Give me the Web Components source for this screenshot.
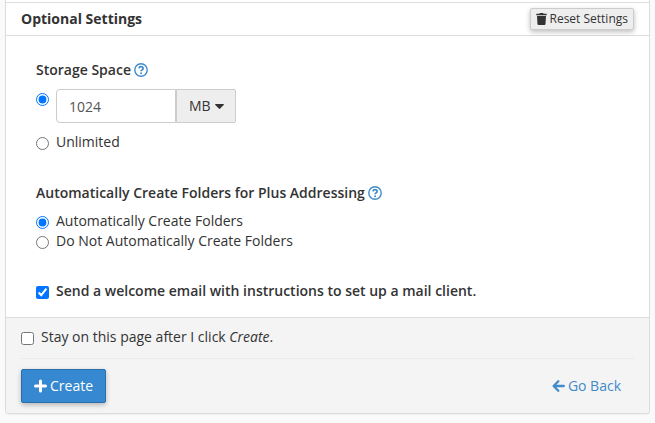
<!DOCTYPE html>
<html lang="en">
<head>
<meta charset="utf-8">
<title>Create an Email Account</title>
<style>
body {
  margin: 0;
  background: #fafafa;
  color: #333;
  font: 14px/20px "Open Sans", "Noto Sans", sans-serif;
}
</style>
</head>
<body>
<form-panel>
  <span slot="title">Optional Settings</span>
  <reset-button slot="action"></reset-button>
  <storage-space></storage-space>
  <plus-addressing></plus-addressing>
  <welcome-email></welcome-email>
  <form-footer slot="footer"></form-footer>
</form-panel>

<script>
const choiceStyle = `
  * { box-sizing: border-box; }
  label { display: flex; align-items: flex-start; }
  input[type=radio], input[type=checkbox] {
    flex: none;
    width: 13px;
    height: 13px;
    margin: 5px 7px 0 0;
    accent-color: #0075ff;
  }
`;

class FormPanel extends HTMLElement {
  constructor() {
    super();
    this.attachShadow({mode: 'open'}).innerHTML = `
    <style>
    :host { display: block; padding: 0 5px 9px; }
    section {
      border: 1px solid #ddd;
      border-top: 0;
      border-radius: 0 0 4px 4px;
      background: #fff;
      box-shadow: 0 1px 1px rgba(0, 0, 0, .05);
      padding-top: 2px;
    }
    header {
      display: flex;
      align-items: center;
      justify-content: space-between;
      height: 34px;
      box-sizing: border-box;
      padding: 0 15px;
      border: solid #ddd;
      border-width: 1px 0;
    }
    h3 { margin: 0; font-size: 14px; font-weight: 700; }
    .body { display: grid; gap: 30px; padding: 24px 30px 16px; }
    </style>
    <section>
      <header><h3><slot name="title"></slot></h3><slot name="action"></slot></header>
      <div class="body"><slot></slot></div>
      <slot name="footer"></slot>
    </section>
    `;
  }
}

class ResetButton extends HTMLElement {
  constructor() {
    super();
    this.attachShadow({mode: 'open'}).innerHTML = `
    <style>
    :host { display: block; }
    button {
      display: flex;
      align-items: center;
      gap: 3px;
      height: 22px;
      padding: 0 5px;
      border: 1px solid #ccc;
      border-radius: 2px;
      background: #eee;
      box-shadow: 0 2px 5px rgba(0, 0, 0, .26);
      color: #333;
      font: 12px/18px "Open Sans", "Noto Sans", sans-serif;
    }
    svg { width: 11px; height: 12px; }
    </style>
    <button type="button">
      <svg viewBox="0 0 448 512" fill="currentColor" aria-hidden="true"><path d="M432 32H312l-9-19A24 24 0 0 0 281 0H167a24 24 0 0 0-22 13l-9 19H16A16 16 0 0 0 0 48v32a16 16 0 0 0 16 16h416a16 16 0 0 0 16-16V48a16 16 0 0 0-16-16zM32 128l21 339a48 48 0 0 0 48 45h246a48 48 0 0 0 48-45l21-339z"/></svg>
      Reset Settings
    </button>
    `;
  }
}

class HelpTip extends HTMLElement {
  constructor() {
    super();
    this.attachShadow({mode: 'open'}).innerHTML = `
    <style>
    :host { display: inline-flex; color: #428bca; }
    button { display: flex; padding: 0; border: 0; background: none; color: inherit; }
    svg { width: 14px; height: 14px; }
    </style>
    <button type="button" aria-label="Help">
      <svg viewBox="0 0 14 14" fill="none" stroke="currentColor" aria-hidden="true">
        <circle cx="7" cy="7" r="6.2" stroke-width="1.400"/>
        <path d="M4.900 5.400C5.100 4.200 5.900 3.700 7 3.700c1.200 0 2.100.7 2.100 1.700 0 1.500-2 1.500-2 2.900" stroke-width="1.700"/>
        <circle cx="7.100" cy="10.200" r="1" fill="currentColor" stroke="none"/>
      </svg>
    </button>
    `;
  }
}

class StorageSpace extends HTMLElement {
  constructor() {
    super();
    this.attachShadow({mode: 'open'}).innerHTML = `
    <style>
    ${choiceStyle}
    :host { display: block; padding-bottom: 1px; }
    .title { display: flex; align-items: center; gap: 3px; font-weight: 600; }
    .quota { display: flex; margin-top: 9px; }
    .quota > input[type=radio] { margin-top: 4px; }
    .group { display: flex; }
    .group input {
      width: 120px;
      height: 34px;
      padding: 6px 12px;
      border: 1px solid #ccc;
      border-radius: 4px 0 0 4px;
      background: #fff;
      color: #555;
      font: inherit;
      outline: 0;
    }
    .unit { position: relative; display: flex; }
    select {
      appearance: none;
      width: 60px;
      height: 34px;
      padding: 0 12px;
      border: 1px solid #ccc;
      border-radius: 0 2px 2px 0;
      background: #eee;
      color: #333;
      font: inherit;
    }
    .caret {
      position: absolute;
      right: 12px;
      top: 15px;
      width: 9px;
      height: 5px;
      fill: #333;
      pointer-events: none;
    }
    .unlimited { margin-top: 9px; }
    </style>
    <div class="title"><span id="title">Storage Space</span><help-tip></help-tip></div>
    <div role="radiogroup" aria-labelledby="title">
      <div class="quota">
        <input type="radio" name="quota" aria-label="Limited" checked>
        <div class="group">
          <input type="text" value="1024" aria-label="Quota">
          <div class="unit">
            <select aria-label="Unit"><option>MB</option><option>GB</option><option>TB</option><option>PB</option></select>
            <svg class="caret" viewBox="0 0 9 5" aria-hidden="true"><path d="M.6 0h7.800q.9.200.3.900L5.200 4.600q-.7.700-1.400 0L.3.900Q-.3.200.6 0z"/></svg>
          </div>
        </div>
      </div>
      <label class="unlimited"><input type="radio" name="quota"><span>Unlimited</span></label>
    </div>
    `;
  }
}

class PlusAddressing extends HTMLElement {
  constructor() {
    super();
    this.attachShadow({mode: 'open'}).innerHTML = `
    <style>
    ${choiceStyle}
    :host { display: block; }
    .title { display: flex; align-items: center; gap: 3px; margin-bottom: 8px; font-weight: 600; }
    </style>
    <div class="title"><span id="title">Automatically Create Folders for Plus Addressing</span><help-tip></help-tip></div>
    <div role="radiogroup" aria-labelledby="title">
      <label><input type="radio" name="folders" checked><span>Automatically Create Folders</span></label>
      <label><input type="radio" name="folders"><span>Do Not Automatically Create Folders</span></label>
    </div>
    `;
  }
}

class WelcomeEmail extends HTMLElement {
  constructor() {
    super();
    this.attachShadow({mode: 'open'}).innerHTML = `
    <style>
    ${choiceStyle}
    :host { display: block; font-weight: 600; }
    </style>
    <label><input type="checkbox" checked><span>Send a welcome email with instructions to set up a mail client.</span></label>
    `;
  }
}

class FormFooter extends HTMLElement {
  constructor() {
    super();
    this.attachShadow({mode: 'open'}).innerHTML = `
    <style>
    ${choiceStyle}
    :host {
      display: block;
      padding: 9px 15px 10px;
      border-top: 1px solid #ddd;
      border-radius: 0 0 3px 3px;
      background: #f4f4f4;
    }
    hr { margin: 11px 0 10px; border: 0; border-top: 1px solid #eaeaea; }
    .actions { display: flex; align-items: center; justify-content: space-between; }
    button, a {
      display: flex;
      align-items: center;
      gap: 3px;
      height: 34px;
      padding: 0 12px;
      border: 1px solid transparent;
      border-radius: 2px;
      font: inherit;
    }
    button {
      border-color: #2a6ead;
      background: #3689d0;
      box-shadow: 0 2px 5px rgba(0, 0, 0, .26);
      color: #fff;
    }
    a { color: #428bca; text-decoration: none; }
    svg { width: 13px; height: 14px; }
    </style>
    <label><input type="checkbox"><span>Stay on this page after I click <em>Create</em>.</span></label>
    <hr>
    <div class="actions">
      <button type="submit">
        <svg viewBox="0 0 13 14" stroke="currentColor" stroke-width="3" stroke-linecap="round" aria-hidden="true"><path d="M6.500 2v10M1.500 7h10"/></svg>
        Create
      </button>
      <a href="#">
        <svg viewBox="0 0 13 14" fill="none" stroke="currentColor" stroke-width="2.300" stroke-linecap="round" stroke-linejoin="round" aria-hidden="true"><path d="M6.300 2.300L1.600 7l4.700 4.700M2 7h9.800"/></svg>
        Go Back
      </a>
    </div>
    `;
  }
}

customElements.define('help-tip', HelpTip);
customElements.define('reset-button', ResetButton);
customElements.define('storage-space', StorageSpace);
customElements.define('plus-addressing', PlusAddressing);
customElements.define('welcome-email', WelcomeEmail);
customElements.define('form-footer', FormFooter);
customElements.define('form-panel', FormPanel);
</script>
</body>
</html>
